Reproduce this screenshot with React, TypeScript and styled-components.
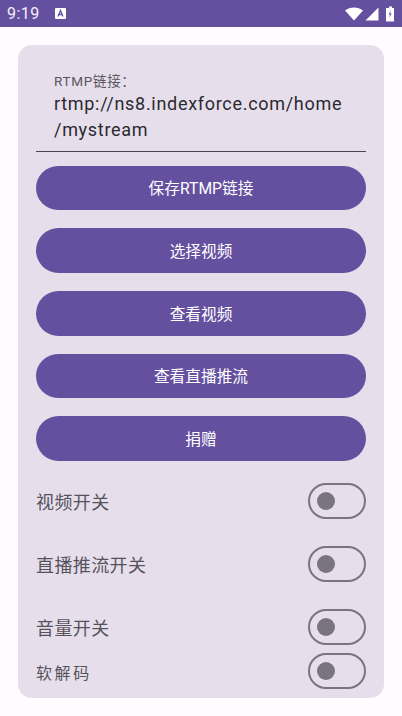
import { FunctionComponent, JSX } from 'react';
import styled, { createGlobalStyle } from 'styled-components';

const GlobalStyle = createGlobalStyle`
  html, body {
    margin: 0;
    padding: 0;
    background: #FFFBFE;
  }
  body {
    font-family: Roboto, 'Noto Sans CJK SC', sans-serif;
  }
`;

const Screen = styled.div`
  width: 402px;
  height: 716px;
  overflow: hidden;
  display: flex;
  flex-direction: column;
  background: #FFFBFE;
`;

const StatusBar = styled.div`
  height: 27px;
  flex: none;
  display: flex;
  align-items: center;
  justify-content: space-between;
  padding: 0 7px 0 7px;
  background: #65509F;
  color: #F3EFF8;
`;
const StatusLeft = styled.div`
  display: flex;
  align-items: center;
  gap: 15px;
`;
const StatusTime = styled.span`
  font-size: 16px;
  font-weight: 400;
  letter-spacing: 0.5px;
`;
const StatusRight = styled.div`
  display: flex;
  align-items: center;
  gap: 2px;
`;

const Card = styled.div`
  margin: 18px 18px 0;
  height: 653px;
  box-sizing: border-box;
  flex: none;
  padding: 27px 18px 0;
  border-radius: 14px;
  background: #E6DFEB;
  display: flex;
  flex-direction: column;
`;

const Field = styled.div`
  height: 79.6px;
  flex: none;
  box-sizing: border-box;
  padding: 0 18px;
  border-bottom: 1px solid #49454F;
`;
const FieldLabel = styled.div`
  font-size: 13.5px;
  line-height: 18px;
  letter-spacing: 0.7px;
  color: #5A5660;
  margin-bottom: 1px;
`;
const FieldValue = styled.div`
  font-size: 18px;
  line-height: 26px;
  letter-spacing: 0.7px;
  color: #2B2930;
`;

const ButtonList = styled.div`
  margin-top: 14px;
  display: flex;
  flex-direction: column;
  gap: 18px;
`;
const Button = styled.div`
  height: 44.67px;
  border-radius: 23px;
  background: #65509F;
  color: #fff;
  font-size: 15.7px;
  font-weight: 400;
  display: flex;
  align-items: center;
  justify-content: center;
`;

const SwitchList = styled.div`
  margin-top: 22.4px;
  display: flex;
  flex-direction: column;
`;
const SwitchRow = styled.div<{ $gap: number }>`
  height: 36px;
  margin-bottom: ${(props) => props.$gap}px;
  display: flex;
  align-items: center;
  justify-content: space-between;
`;
const SwitchLabel = styled.span<{ $small?: boolean }>`
  font-size: ${(props) => (props.$small ? 16 : 18)}px;
  font-weight: 400;
  color: #56525C;
  letter-spacing: ${(props) => (props.$small ? 2.6 : 0.4)}px;
  ${(props) => (props.$small ? 'position: relative; top: 1px;' : '')}
`;
const Track = styled.div`
  width: 58px;
  height: 36px;
  box-sizing: border-box;
  border: 2px solid #79747E;
  border-radius: 18px;
  display: flex;
  align-items: center;
  padding-left: 7px;
`;
const Thumb = styled.div`
  width: 18px;
  height: 18px;
  border-radius: 50%;
  background: #79747E;
`;

const buttons = ['保存RTMP链接', '选择视频', '查看视频', '查看直播推流', '捐赠'];
const switches = [
  { label: '直播推流开关', gap: 26.67 },
  { label: '音量开关', gap: 8.67 },
];

const App: FunctionComponent = (): JSX.Element => {
  return (
    <Screen>
      <GlobalStyle />
      <StatusBar>
        <StatusLeft>
          <StatusTime>9:19</StatusTime>
          <svg width="11" height="11" viewBox="0 0 11 11">
            <rect width="11" height="11" rx="1" fill="#fff" />
            <path d="M3 8.5 5.5 2.5 8 8.5M3.9 6.5H7.1" fill="none" stroke="#65509F" strokeWidth="1.3" />
          </svg>
        </StatusLeft>
        <StatusRight>
          <svg width="18" height="14" viewBox="0 0 18 14">
            <path d="M0 3.5C2.5 1.4 5.6 0.5 9 0.5S15.5 1.4 18 3.5L9 13.5Z" fill="#fff" />
          </svg>
          <svg width="14" height="14" viewBox="0 0 14 14">
            <path d="M13.5 0.5V13.5H0.5Z" fill="#fff" />
          </svg>
          <svg width="14" height="16" viewBox="0 0 14 16">
            <path d="M8 0.5H11V2H13V15.5H5V2H8Z" fill="#fff" />
            <path d="M10 4 7.6 8.5H9L8.3 12 10.6 7.5H9.2Z" fill="#65509F" />
          </svg>
        </StatusRight>
      </StatusBar>
      <Card>
        <Field>
          <FieldLabel>RTMP链接：</FieldLabel>
          <FieldValue>rtmp://ns8.indexforce.com/home<wbr />/mystream</FieldValue>
        </Field>
        <ButtonList>
          {buttons.map((label) => (
            <Button key={label}>{label}</Button>
          ))}
        </ButtonList>
        <SwitchList>
          <SwitchRow $gap={26.67}>
            <SwitchLabel>视频开关</SwitchLabel>
            <Track><Thumb /></Track>
          </SwitchRow>
          {switches.map((item) => (
            <SwitchRow key={item.label} $gap={item.gap}>
              <SwitchLabel>{item.label}</SwitchLabel>
              <Track><Thumb /></Track>
            </SwitchRow>
          ))}
          <SwitchRow $gap={0}>
            <SwitchLabel $small>软解码</SwitchLabel>
            <Track><Thumb /></Track>
          </SwitchRow>
        </SwitchList>
      </Card>
    </Screen>
  );
};

export default App;
